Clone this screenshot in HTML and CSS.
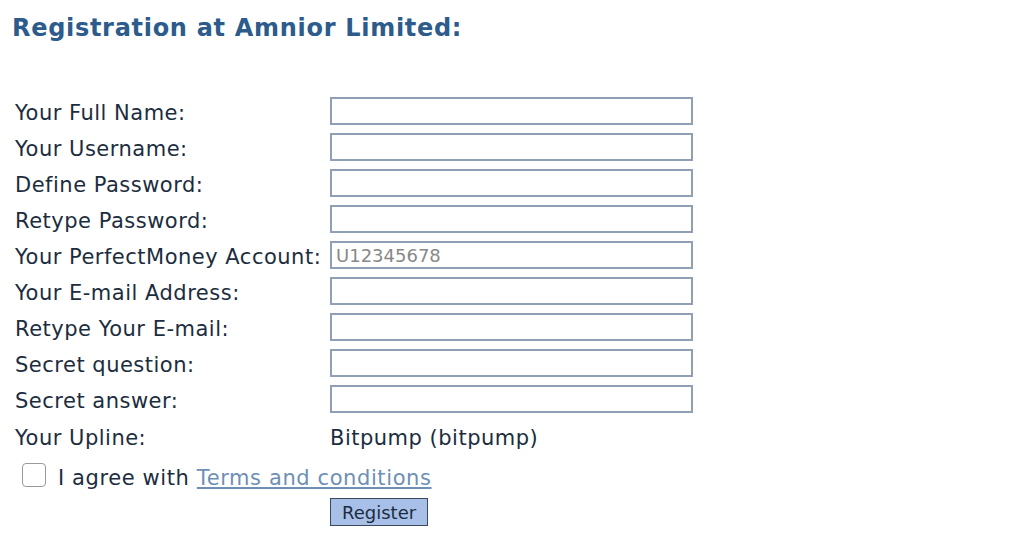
FILE: index.html
```html
<!DOCTYPE html>
<html lang="en">

<head>
  <meta charset="UTF-8">
  <title>Registration</title>
  <link rel="stylesheet" href="styles.css">
</head>

<body>
  <h1 class="title">Registration at Amnior Limited:</h1>

  <form class="reg-form">
    <div class="row">
      <label for="fullname">Your Full Name:</label>
      <input type="text" id="fullname">
    </div>
    <div class="row">
      <label for="username">Your Username:</label>
      <input type="text" id="username">
    </div>
    <div class="row">
      <label for="password">Define Password:</label>
      <input type="password" id="password">
    </div>
    <div class="row">
      <label for="password2">Retype Password:</label>
      <input type="password" id="password2">
    </div>
    <div class="row">
      <label for="pm">Your PerfectMoney Account:</label>
      <input type="text" id="pm" placeholder="U12345678">
    </div>
    <div class="row">
      <label for="email">Your E-mail Address:</label>
      <input type="text" id="email">
    </div>
    <div class="row">
      <label for="email2">Retype Your E-mail:</label>
      <input type="text" id="email2">
    </div>
    <div class="row">
      <label for="question">Secret question:</label>
      <input type="text" id="question">
    </div>
    <div class="row">
      <label for="answer">Secret answer:</label>
      <input type="text" id="answer">
    </div>
    <div class="row upline">
      <span>Your Upline:</span>
      <span>Bitpump (bitpump)</span>
    </div>
    <div class="agree">
      <span class="check"></span>
      <span>I agree with <a href="#">Terms and conditions</a></span>
    </div>
    <div class="submit-row">
      <button type="button">Register</button>
    </div>
  </form>
</body>

</html>
```

FILE: styles.css
```css
body {
  margin: 0;
  padding: 12px 12px 0;
  background: #fff;
  font-family: "DejaVu Sans", Verdana, sans-serif;
  color: #1c2d40;
}

.title {
  margin: 0;
  font-size: 24px;
  letter-spacing: 0.7px;
  line-height: 32px;
  color: #2c5b8c;
}

.reg-form {
  margin-top: 49px;
  padding-left: 3px;
}

.row {
  display: grid;
  grid-template-columns: 315px 363px;
  align-items: center;
  height: 36px;
  font-size: 21px;
  letter-spacing: 0.5px;
}

.row label,
.row span {
  padding-top: 3px;
}

.row input {
  box-sizing: border-box;
  width: 363px;
  height: 28px;
  margin: 0;
  padding: 0 4px;
  border: 2px solid #8fa0b4;
  font-family: "DejaVu Sans", Verdana, sans-serif;
  font-size: 18px;
  letter-spacing: 0;
  color: #333;
}

.row input::placeholder {
  color: #888;
}

.upline {
  height: 38px;
}

.agree {
  display: flex;
  align-items: center;
  gap: 12px;
  height: 40px;
  padding-left: 7px;
  padding-top: 3px;
  font-size: 21px;
  letter-spacing: 0.6px;
}

.check {
  width: 22px;
  height: 22px;
  border: 1px solid #9a9a9a;
  border-radius: 4px;
  margin-top: -6px;
}

.agree a {
  color: #6e8fb6;
}

.submit-row {
  padding-left: 315px;
  margin-top: 0;
}

button {
  height: 28px;
  padding: 0 11px;
  background: #a8c0e8;
  border: 1px solid #3a4a5e;
  font-family: "DejaVu Sans", Verdana, sans-serif;
  font-size: 18px;
  color: #1c2d40;
}
```
